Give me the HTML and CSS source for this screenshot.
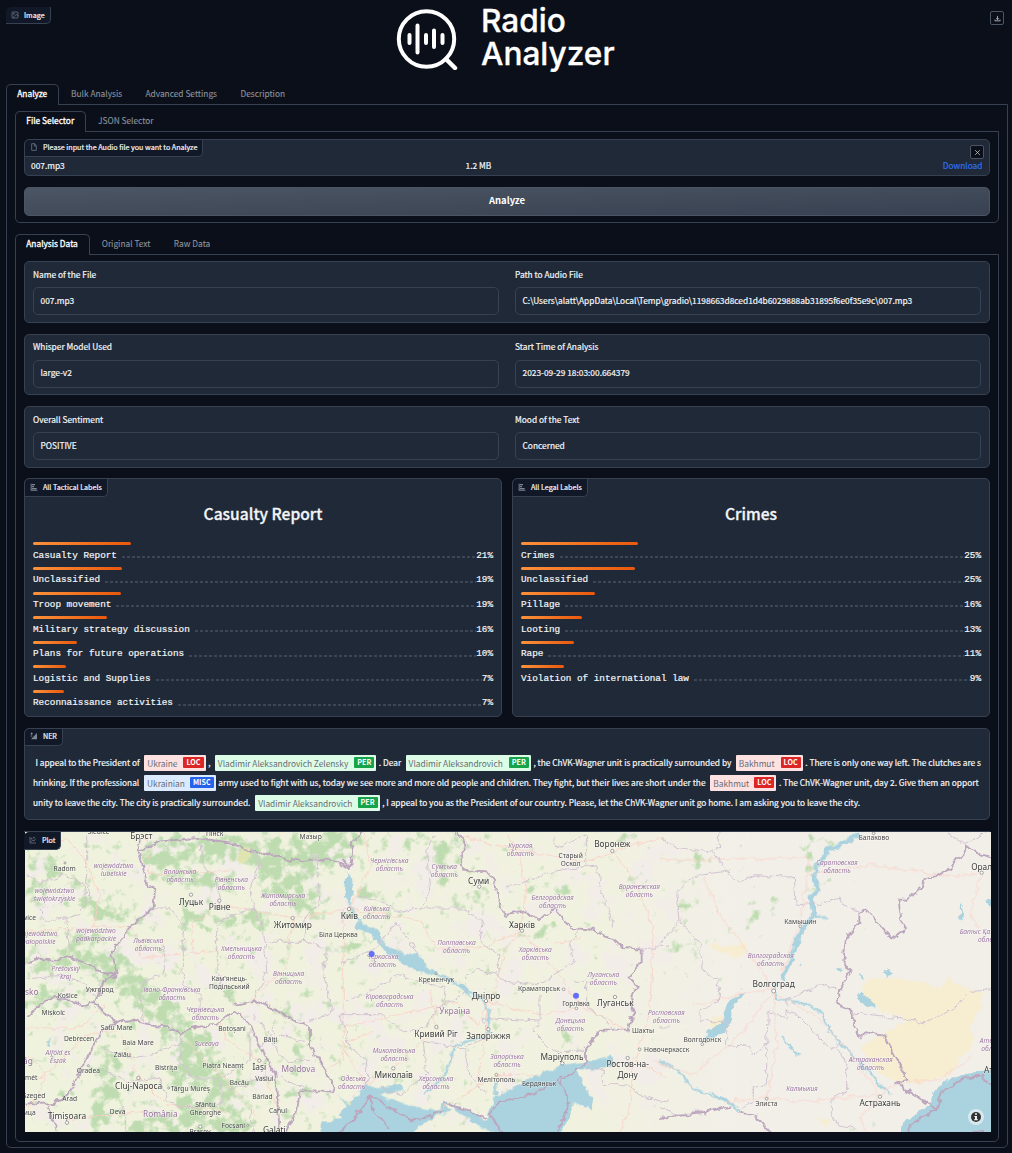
FILE: index.html
```html
<!DOCTYPE html>
<html lang="en">
<head>
<meta charset="utf-8">
<title>Radio Analyzer</title>
<link rel="stylesheet" href="styles.css">
</head>
<body>
<header class="banner">
  <div class="tag tag-image"><svg class="ico" viewBox="0 0 24 24"><rect x="3" y="3" width="18" height="18" rx="2"/><circle cx="8.5" cy="8.5" r="1.5"/><path d="M21 15l-5-5L5 21"/></svg>Image</div>
  <div class="logo">
    <svg class="logo-mark" viewBox="0 0 62 62"><circle cx="30.5" cy="31" r="27.7" stroke-width="4"/><path stroke-width="4.5" d="M50 51l9 9"/><path stroke-width="4" d="M13.500 27v8M21.500 17.500v27M30 27v8M38 22.500v16.500M46.500 27v8"/></svg>
    <div class="logo-text">Radio<br>Analyzer</div>
  </div>
  <button class="icon-btn"><svg viewBox="0 0 24 24"><path d="M12 3v13M7 11l5 5 5-5M3 16v4h18v-4"/></svg></button>
</header>

<nav class="tabs"><span class="tab on">Analyze</span><span class="tab">Bulk Analysis</span><span class="tab">Advanced Settings</span><span class="tab">Description</span></nav>
<main class="panel outer">
  <nav class="tabs inner"><span class="tab on">File Selector</span><span class="tab">JSON Selector</span></nav>
  <section class="panel selector">
    <div class="block file">
      <div class="tag"><svg class="ico" viewBox="0 0 24 24"><path d="M14 2H5v20h14V8zM13 2v7h6"/></svg>Please input the Audio file you want to Analyze</div>
      <button class="icon-btn"><svg class="cross" viewBox="0 0 24 24"><path d="M4 4l16 16M20 4L4 20"/></svg></button>
      <div class="file-row"><span>007.mp3</span><span>1.2 MB</span><a>Download</a></div>
    </div>
    <button class="primary">Analyze</button>
  </section>

  <nav class="tabs inner second"><span class="tab on">Analysis Data</span><span class="tab">Original Text</span><span class="tab">Raw Data</span></nav>
  <section class="panel results">
    <div class="block pair">
      <label>Name of the File<span class="input">007.mp3</span></label>
      <label>Path to Audio File<span class="input path">C:\Users\alatt\AppData\Local\Temp\gradio\1198663d8ced1d4b6029888ab31895f6e0f35e9c\007.mp3</span></label>
    </div>
    <div class="block pair">
      <label>Whisper Model Used<span class="input">large-v2</span></label>
      <label>Start Time of Analysis<span class="input">2023-09-29 18:03:00.664379</span></label>
    </div>
    <div class="block pair">
      <label>Overall Sentiment<span class="input">POSITIVE</span></label>
      <label>Mood of the Text<span class="input">Concerned</span></label>
    </div>
    <div class="charts">
      <div class="block chart">
        <div class="tag"><svg class="ico solid" viewBox="0 0 24 24"><path d="M2 2h3v18h17v3H2zM6 3h9v4H6zM6 9h6v4H6zM6 15h14v4H6z"/></svg>All Tactical Labels</div>
        <h2>Casualty Report</h2>
        <div class="row"><i style="width:98px"></i><p>Casualty Report<b></b><span>21%</span></p></div>
        <div class="row"><i style="width:89px"></i><p>Unclassified<b></b><span>19%</span></p></div>
        <div class="row"><i style="width:88px"></i><p>Troop movement<b></b><span>19%</span></p></div>
        <div class="row"><i style="width:74px"></i><p>Military strategy discussion<b></b><span>16%</span></p></div>
        <div class="row"><i style="width:44px"></i><p>Plans for future operations<b></b><span>10%</span></p></div>
        <div class="row"><i style="width:33px"></i><p>Logistic and Supplies<b></b><span>7%</span></p></div>
        <div class="row"><i style="width:31px"></i><p>Reconnaissance activities<b></b><span>7%</span></p></div>
      </div>
      <div class="block chart">
        <div class="tag"><svg class="ico solid" viewBox="0 0 24 24"><path d="M2 2h3v18h17v3H2zM6 3h9v4H6zM6 9h6v4H6zM6 15h14v4H6z"/></svg>All Legal Labels</div>
        <h2>Crimes</h2>
        <div class="row"><i style="width:117px"></i><p>Crimes<b></b><span>25%</span></p></div>
        <div class="row"><i style="width:114px"></i><p>Unclassified<b></b><span>25%</span></p></div>
        <div class="row"><i style="width:74px"></i><p>Pillage<b></b><span>16%</span></p></div>
        <div class="row"><i style="width:61px"></i><p>Looting<b></b><span>13%</span></p></div>
        <div class="row"><i style="width:53px"></i><p>Rape<b></b><span>11%</span></p></div>
        <div class="row"><i style="width:43px"></i><p>Violation of international law<b></b><span>9%</span></p></div>
      </div>
    </div>
    <div class="block ner">
      <div class="tag"><svg class="ico bright" viewBox="0 0 24 24"><path d="M2 5h6M5 2v6M2 12h5"/><path class="fill" d="M3 22L21 3v19z"/></svg>NER</div>
      <div class="line l1"><span class="t">I appeal to the President of</span><mark class="loc">Ukraine<em>LOC</em></mark><span class="t">,</span><mark class="per">Vladimir Aleksandrovich Zelensky<em>PER</em></mark><span class="t">. Dear</span><mark class="per">Vladimir Aleksandrovich<em>PER</em></mark><span class="t">, the ChVK-Wagner unit is practically surrounded by</span><mark class="loc">Bakhmut<em>LOC</em></mark><span class="t">. There is only one way left. The clutches are s</span></div>
      <div class="line"><span class="t">hrinking. If the professional</span><mark class="misc">Ukrainian<em>MISC</em></mark><span class="t">army used to fight with us, today we see more and more old people and children. They fight, but their lives are short under the</span><mark class="loc">Bakhmut<em>LOC</em></mark><span class="t">. The ChVK-Wagner unit, day 2. Give them an opport</span></div>
      <div class="line"><span class="t">unity to leave the city. The city is practically surrounded.</span><mark class="per">Vladimir Aleksandrovich<em>PER</em></mark><span class="t">, I appeal to you as the President of our country. Please, let the ChVK-Wagner unit go home. I am asking you to leave the city.</span></div>
    </div>
    <div class="plot">
      <div class="tag"><svg class="ico" viewBox="0 0 24 24"><path d="M3 3v18h18M7 17l4-5 4 3 5-7"/><circle cx="8" cy="8" r="1.500"/><circle cx="15" cy="5" r="1.500"/></svg>Plot</div>
      <svg class="map" viewBox="0 0 2898 900" preserveAspectRatio="none">
        <defs>
          <linearGradient id="land"><stop offset="0" stop-color="#eff2dc"/><stop offset=".6" stop-color="#f1f1e0"/><stop offset=".76" stop-color="#f2efe9"/><stop offset="1" stop-color="#f2efe9"/></linearGradient>
          <filter id="woods" filterUnits="userSpaceOnUse" x="0" y="0" width="2898" height="900" color-interpolation-filters="sRGB">
            <feGaussianBlur in="SourceGraphic" stdDeviation="16" result="s"/>
            <feTurbulence type="fractalNoise" baseFrequency=".03" numOctaves="5" seed="7" result="n"/>
            <feComposite in="s" in2="n" operator="arithmetic" k2=".34" k3=".65"/>
            <feColorMatrix values="0 0 0 0 .745  0 0 0 0 .863  0 0 0 0 .69  0 0 0 7 -3.8"/>
          </filter>
          <filter id="heath" filterUnits="userSpaceOnUse" x="0" y="0" width="2898" height="900" color-interpolation-filters="sRGB">
            <feGaussianBlur in="SourceGraphic" stdDeviation="30" result="s"/>
            <feTurbulence type="fractalNoise" baseFrequency=".012" numOctaves="4" seed="3" result="n"/>
            <feComposite in="s" in2="n" operator="arithmetic" k2=".3" k3=".65"/>
            <feColorMatrix values="0 0 0 0 .95  0 0 0 0 .93  0 0 0 0 .91  0 0 0 9 -5"/>
          </filter>
          <filter id="rough" filterUnits="userSpaceOnUse" x="0" y="0" width="2898" height="900" color-interpolation-filters="sRGB">
            <feTurbulence type="fractalNoise" baseFrequency=".04" numOctaves="3" seed="5"/>
            <feDisplacementMap in="SourceGraphic" scale="22" xChannelSelector="R" yChannelSelector="G"/>
          </filter>
        </defs>
        <rect width="2898" height="900" fill="url(#land)"/>
        <g filter="url(#heath)"><rect width="2000" height="900" opacity=".75"/></g>
        <g filter="url(#woods)" class="woods">
          <rect width="1000" height="900" opacity=".37" stroke="none"/><rect x="1000" width="500" height="900" opacity=".28" stroke="none"/><rect x="1500" width="700" height="500" opacity=".18" stroke="none"/>
          <g transform="translate(-15 -12)">
            <path stroke-width="85" d="M180 350L280 420L370 500L470 590L560 700L600 820L650 910"/>
            <path stroke-width="50" d="M20 410L150 400L260 440M20 520L120 500"/>
            <path stroke-width="80" d="M400 70L560 55L680 70M730 120L850 130L960 30M740 50L990 40M780 160L880 230"/>
            <path stroke-width="45" d="M400 130L640 170M40 90L100 130M500 270L740 280M170 190L250 250L350 270M20 210L100 150"/>
            <path stroke-width="70" d="M265 700L260 800L230 880M490 650L490 780L500 880M330 900L600 880"/>
            <path stroke-width="30" opacity=".7" d="M780 540L850 620L830 800M650 700L700 860M590 470L640 510"/>
          </g>
          <g transform="translate(945 -12)"><path stroke-width="50" opacity=".75" d="M10 30L120 30M280 60L330 150M180 30L290 30L340 120M340 20L370 60M60 200L150 240M590 320L620 300M350 240L440 200M20 360L110 350M580 180L690 170M900 140L880 180M840 40L870 20M680 620L690 670"/></g>
          <g transform="translate(1905 -12)"><path stroke-width="42" opacity=".8" d="M420 30L510 40M440 80L480 130M80 130L130 90M250 290L350 210M50 350L120 350M60 270L80 220M440 170L480 190M640 910L600 900"/></g>
        </g>
        <path fill="#dfe4b0" transform="translate(-15 -12)" d="M668 55L690 58L692 85L670 110L650 95Z"/>
        <g transform="translate(1905 -12)" fill="#f7edd0" filter="url(#rough)">
          <path d="M625 455L700 450L800 465L840 485L860 445L925 485L970 490L960 540L930 600L940 650L905 690L870 740L780 765L690 755L640 720L605 660L670 615L730 590L735 568L660 545L620 510L605 485Z"/>
          <path d="M155 570L185 560L190 600L150 615ZM150 345L215 360L250 340L262 370L220 395L205 375L155 365ZM475 870L515 880L500 905Z"/>
        </g>
        <g fill="#aad3df" filter="url(#rough)">
          <path transform="translate(-15 -12)" d="M950 798L972 820L990 830L1010 915L905 915L905 880L940 880L975 860L978 835ZM978 150L990 140L1002 200L985 220L976 190ZM78 650L95 625L85 655Z"/>
          <g transform="translate(945 -12)">
            <path d="M0 915L0 860L60 795L80 765L110 785L180 770L195 785L120 800L200 830L290 850L315 820L330 850L270 870L220 912L220 925L0 925Z"/>
            <path d="M320 825L400 850L440 880L460 810L500 790L560 755L620 730L670 710L740 700L815 683L825 710L770 725L710 725L730 770L760 810L755 845L700 820L690 860L665 912L665 925L480 925L420 895Z"/>
            <path d="M20 130L30 150L28 220L15 210ZM45 280L100 300L125 315L120 345L200 380L225 370L245 395L275 430L240 435L170 395L110 345L95 320L50 300ZM340 460L385 480L395 510L375 495Z"/>
            <path d="M462 760L472 800L465 805ZM0 870L-50 915L0 915Z"/>
          </g>
          <g transform="translate(1905 -12)">
            <path d="M255 495L225 530L210 570L195 615L150 625L135 640L145 600L185 590L195 550L210 515ZM490 60L525 55L570 45L505 70L500 80ZM150 790L190 805L240 840L200 825Z"/>
            <path d="M1020 725L940 730L860 760L820 790L800 840L730 880L720 930L1020 930ZM605 490L650 540L615 535L590 510ZM975 215L1000 210L1000 240ZM670 425L700 435L680 450ZM530 420L548 422L545 432L530 432Z"/>
          </g>
        </g>
        <g class="river" filter="url(#rough)">
          <path transform="translate(945 -12)" stroke-width="7" d="M25 190L35 260L100 320L170 380L280 435L370 475L430 520L445 550L448 620L350 650L310 750L250 800M470 760L465 800"/>
          <g transform="translate(1905 -12)">
            <path stroke-width="13" d="M600 22L510 65L470 110L462 150L480 185L450 210L465 255L430 300L408 350L385 410L365 455"/>
            <path stroke-width="6" d="M355 465L342 490L350 515L440 525L485 555L505 605L560 665L610 715L660 770L690 800M465 265L505 268M0 700L50 725L100 780L200 820L240 850M365 625L415 685M900 270L908 225M610 455L600 440M420 410L425 415"/>
          </g>
        </g>
        <g class="road" filter="url(#rough)">
          <g transform="translate(-15 -12)">
            <path d="M50 60L140 30L200 100L240 200L220 300L20 310M380 20L390 140L640 125M220 295L340 300L360 390L520 375L590 370M520 375L515 290L600 230L820 270L990 245M820 270L800 420L690 520M20 600L180 600L260 520M20 680L80 740L20 860M290 610L200 620L100 720L50 760M360 750L440 830L620 850M360 750L300 620M720 700L620 640L600 570M720 700L780 860M140 875L280 860L370 850M500 640L600 740L710 860M970 250L970 700L920 720"/>
          </g>
          <g transform="translate(945 -12)">
            <path d="M70 20L95 110L50 200L30 240M30 240L240 280L290 360L420 360L540 310M545 305L500 360L460 490L440 520M460 490L410 590L350 520L0 600M540 310L560 180L530 60L500 20M350 20L500 60L740 100L820 70M820 70L890 170L940 300L930 540L890 690M820 70L960 30M545 305L640 420L720 530L850 600M880 690L870 840L840 912M880 690L980 750M440 520L600 560L700 540M440 550L440 620L410 750M160 720L290 600L270 480M160 720L80 770L0 640M640 350L720 330M300 850L460 740L600 740M20 640L100 610"/>
          </g>
          <g transform="translate(1905 -12)">
            <path d="M0 95L450 90M130 150L180 260L340 480M340 480L100 530M450 90L430 230L420 290L360 440M450 140L640 110L860 145L965 135M340 490L240 620L100 740L-20 700M340 490L350 650L320 810M200 820L320 810L440 820L660 800M350 500L460 560L560 660L660 800M660 800L700 770L850 750L940 680M965 135L930 250L960 310M660 800L600 870L620 915"/>
          </g>
        </g>
        <g class="border" filter="url(#rough)">
          <g transform="translate(-15 -12)">
            <path class="b2" d="M20 402L60 392L100 398L140 385L200 405L250 435L290 440M290 440L275 370L330 300L400 240L405 185L385 170L355 70L360 30M360 70L420 40L530 30L640 45L690 70L730 75L830 100L880 95L940 95L990 125M290 440L250 460L225 525L290 585L330 575L390 590L450 595L485 620L510 600L590 590L640 550L680 575L720 660L765 730L780 912M640 530L720 520L790 560L870 600L870 650L935 760L945 795L900 790L840 790L830 850L800 912M225 525L185 535L150 515L110 510L70 520L20 570M290 585L245 610L200 690L180 730L145 800L100 825L20 830M85 835L110 912"/>
            <path d="M20 140L60 165L130 140L190 170L200 210L180 260L140 265L80 280L50 240M140 265L150 380M200 20L200 170L210 220M540 50L550 110L590 150L600 230M390 240L450 240L490 290M690 60L720 100L690 190L700 240L590 280L590 370L600 480L640 520M490 290L490 470L540 500L540 570M430 350L430 440L370 460L360 510L370 580M700 240L730 300L740 430L700 520M890 80L900 230L860 260L850 340L740 340M850 340L920 360L910 440L940 550L870 580M480 620L480 700L520 750L600 750L690 700L690 600M250 660L330 690L400 680L480 640M240 720L320 760L420 750L440 820L500 840L610 820L600 760M620 790L690 760L760 740M700 560L750 620L720 660M760 570L760 650L800 700L870 700M780 620L850 640M780 750L850 780M310 830L320 912M690 840L700 912M20 450L120 440L180 460L230 510"/>
          </g>
          <g transform="translate(945 -12)">
            <path class="b2" d="M70 12L40 40L30 120L0 95M350 12L380 50L360 90L370 125L440 130L465 160L480 240L500 260L560 250L590 275L650 245L690 300L760 305L830 340L850 360L905 365L905 400L865 450L890 470L870 530L885 550L865 605L780 605L735 660L735 710L660 760L690 825L650 912M660 750L580 800L480 820L450 860L485 912M310 825L380 845L440 870M90 800L95 840L150 900M310 850L215 880L90 800M0 912L60 850L90 800"/>
            <path d="M280 20L260 70L270 200L240 240L170 250L150 230L50 200M170 280L110 360L0 410M170 280L230 370L225 395M240 240L360 240L430 280L420 340L480 380L470 440L500 460L600 470L700 400L690 350L720 300M470 440L420 425L380 440L370 500L290 540L260 600L180 610L130 560L0 560M180 440L110 480L20 520M180 440L240 460L320 480L310 540M430 570L460 570L600 580L600 500M430 570L440 630L370 660L250 640L260 740L180 800L120 780M370 660L390 740L440 800M600 580L580 610L640 670L730 670M500 180L590 150L640 130L770 110L780 170L820 300M640 20L650 60L740 20L740 110M700 460L740 460L740 530L820 600M960 600L990 600M0 560L30 660L80 700L80 770M900 365L990 350M735 710L790 730L790 770L860 770L900 800L960 820L990 820"/>
          </g>
          <g transform="translate(1905 -12)">
            <path class="b2" d="M1000 90L950 75L915 55L910 75L870 120L830 145L790 150L785 180L740 215L715 215L725 280L738 300L695 332L665 300L620 242L598 255L598 285L558 330L550 400L570 430L522 525L578 550L580 600L600 625L610 612L670 620L745 752L710 765L830 845L845 790L915 750L970 740L980 770L1000 772M830 845L750 890L745 915M990 912L940 912M240 850L290 865L330 912M0 870L130 855L210 835"/>
            <path d="M0 30L40 55L140 75L175 60L180 12M160 70L195 130L235 165L290 140L400 150L405 225L480 230L540 210L560 240L598 250M195 130L100 145L50 195L60 280L0 350M60 280L120 350L130 430L175 460L175 520L120 550L120 580L200 580L200 650L270 655L280 685L320 650L325 550L380 570L385 515L480 470L530 480M380 550L410 560L450 600L510 665L550 645M530 660L560 710L560 790L520 810L510 850L530 890L590 900M320 650L320 770L280 775L280 820L240 850M580 555L730 570L790 585L870 550L935 490L1000 485M860 15L915 50L1000 0M0 835L40 860L130 850"/>
          </g>
        </g>
        <g class="dots">
          <g transform="translate(-15 -12)"><circle cx="513" cy="200" r="5"/><circle cx="598" cy="218" r="5"/><circle cx="818" cy="270" r="5"/><circle cx="355" cy="750" r="5"/><circle cx="718" cy="698" r="5"/><circle cx="141" cy="884" r="5"/><circle cx="541" cy="896" r="5"/><circle cx="135" cy="105" r="3"/><circle cx="205" cy="713" r="3"/><circle cx="446" cy="780" r="3"/><circle cx="683" cy="892" r="3"/></g>
          <g transform="translate(945 -12)"><circle cx="27" cy="243" r="5"/><circle cx="418" cy="176" r="5"/><circle cx="546" cy="308" r="5"/><circle cx="817" cy="69" r="5"/><circle cx="438" cy="519" r="5"/><circle cx="445" cy="604" r="5"/><circle cx="289" cy="597" r="5"/><circle cx="160" cy="721" r="5"/><circle cx="667" cy="706" r="5"/><circle cx="825" cy="507" r="5"/><circle cx="863" cy="690" r="5"/><circle cx="671" cy="484" r="4"/><circle cx="899" cy="664" r="4"/><circle cx="709" cy="541" r="4"/><circle cx="288" cy="437" r="3"/><circle cx="469" cy="740" r="4"/></g>
          <g transform="translate(1905 -12)"><circle cx="341" cy="489" r="6"/><circle cx="660" cy="806" r="5"/><circle cx="965" cy="134" r="5"/><circle cx="320" cy="812" r="4"/><circle cx="421" cy="295" r="4"/><circle cx="641" cy="16" r="4"/><circle cx="127" cy="649" r="4"/></g>
        </g>
        <g class="region">
          <g transform="translate(-15 -12)">
            <text x="281" y="121">województwo<tspan x="281" dy="24">lubelskie</tspan></text>
            <text x="103" y="195">województwo<tspan x="103" dy="24">świętokrzyskie</tspan></text>
            <text x="228" y="316">województwo<tspan x="228" dy="24">podkarpackie</tspan></text>
            <text x="53" y="325">województwo<tspan x="53" dy="24">małopolskie</tspan></text>
            <text x="480" y="139">Волинська<tspan x="480" dy="24">область</tspan></text>
            <text x="634" y="161">Рівненська<tspan x="634" dy="24">область</tspan></text>
            <text x="789" y="211">Житомирська<tspan x="789" dy="24">область</tspan></text>
            <text x="385" y="346">Львівська<tspan x="385" dy="24">область</tspan></text>
            <text x="664" y="368">Хмельницька<tspan x="664" dy="24">область</tspan></text>
            <text x="806" y="445">Вінницька<tspan x="806" dy="24">область</tspan></text>
            <text x="456" y="492">Івано-Франківська<tspan x="456" dy="24">область</tspan></text>
            <text x="556" y="553">Чернівецька<tspan x="556" dy="24">область</tspan></text>
            <text x="137" y="429">Prešovský<tspan x="137" dy="24">kraj</tspan></text>
            <text x="114" y="682">Alföld és<tspan x="114" dy="24">Észak</tspan></text>
            <text x="560" y="655">Suceava</text>
            <text x="1000" y="760">Одеська<tspan x="995" dy="24">область</tspan></text>
          </g>
          <g transform="translate(945 -12)">
            <text x="148" y="105">Чернігівська<tspan x="148" dy="24">область</tspan></text>
            <text x="313" y="123">Сумська<tspan x="313" dy="24">область</tspan></text>
            <text x="541" y="60">Курская<tspan x="541" dy="24">область</tspan></text>
            <text x="638" y="215">Белгородская<tspan x="638" dy="24">область</tspan></text>
            <text x="898" y="182">Воронежская<tspan x="898" dy="24">область</tspan></text>
            <text x="110" y="249">Київська<tspan x="110" dy="24">область</tspan></text>
            <text x="350" y="352">Полтавська<tspan x="350" dy="24">область</tspan></text>
            <text x="586" y="373">Харківська<tspan x="586" dy="24">область</tspan></text>
            <text x="128" y="394">Черкаська<tspan x="128" dy="24">область</tspan></text>
            <text x="790" y="447">Луганська<tspan x="790" dy="24">область</tspan></text>
            <text x="149" y="513">Кіровоградська<tspan x="149" dy="24">область</tspan></text>
            <text x="691" y="585">Донецька<tspan x="691" dy="24">область</tspan></text>
            <text x="162" y="674">Миколаївська<tspan x="162" dy="24">область</tspan></text>
            <text x="501" y="694">Запорізька<tspan x="501" dy="24">область</tspan></text>
            <text x="288" y="758">Херсонська<tspan x="288" dy="24">область</tspan></text>
            <text x="979" y="562">Ростовская<tspan x="979" dy="24">область</tspan></text>
          </g>
          <g transform="translate(1905 -12)">
            <text x="531" y="111">Саратовская<tspan x="531" dy="24">область</tspan></text>
            <text x="332" y="390">Волгоградская<tspan x="332" dy="24">область</tspan></text>
            <text x="632" y="702">Астраханская<tspan x="632" dy="24">область</tspan></text>
            <text x="426" y="789">Калмыкия</text>
            <text x="985" y="318">Батыс Қазақстан<tspan x="990" dy="24">облысы</tspan></text>
            <text x="997" y="646">Атырау<tspan x="1000" dy="24">облысы</tspan></text>
          </g>
        </g>
        <g class="country">
          <text x="820" y="720">Moldova</text><text x="406" y="856">România</text><text x="1289" y="545">Україна</text><text x="-18" y="489">Slovensko</text><text x="-60" y="696">Magyarország</text>
        </g>
        <g class="city">
          <g transform="translate(-15 -12)">
            <text x="364" y="33">Брэст</text><text x="513" y="230">Луцьк</text><text x="599" y="246">Рівне</text><text x="818" y="300">Житомир</text><text x="356" y="783">Cluj-Napoca</text><text x="718" y="726">Iași</text><text x="141" y="874">Timișoara</text><text x="763" y="914">Galați</text>
          </g>
          <g transform="translate(945 -12)">
            <text x="416" y="168">Суми</text><text x="817" y="58">Воронеж</text><text x="546" y="299">Харків</text><text x="28" y="273">Київ</text><text x="438" y="512">Дніпро</text><text x="445" y="634">Запоріжжя</text><text x="288" y="626">Кривий Ріг</text><text x="161" y="750">Миколаїв</text><text x="666" y="697">Маріуполь</text><text x="826" y="535">Луганськ</text><text x="863" y="718">Ростов-на-<tspan x="863" dy="31">Дону</tspan></text>
          </g>
          <g transform="translate(1905 -12)"><text x="341" y="478">Волгоград</text><text x="660" y="835">Астрахань</text><text x="965" y="126">Орал</text><text x="1016" y="735">Атырау</text></g>
        </g>
        <g class="town">
          <g transform="translate(-15 -12)">
            <text x="236" y="17">Siedlce</text><text x="584" y="23">Пінск</text><text x="872" y="34">Мазыр</text><text x="134" y="129">Radom</text><text x="6" y="277">Katowice</text><text x="239" y="492">Ужгород</text><text x="143" y="509">Košice</text><text x="100" y="562">Miskolc</text><text x="628" y="460">Кам'янець-<tspan x="628" dy="24">Подільський</tspan></text><text x="290" y="605">Satu Mare</text><text x="177" y="640">Debrecen</text><text x="354" y="652">Baia Mare</text><text x="307" y="687">Zalău</text><text x="205" y="735">Oradea</text><text x="438" y="727">Bistrița</text><text x="636" y="610">Botoșani</text><text x="751" y="641">Bălți</text><text x="609" y="720">Piatra Neamț</text><text x="733" y="759">Vaslui</text><text x="658" y="770">Bacău</text><text x="511" y="788">Târgu Mureș</text><text x="727" y="812">Bârlad</text><text x="774" y="856">Cahul</text><text x="556" y="836">Sfântu<tspan x="556" dy="24">Gheorghe</tspan></text><text x="149" y="820">Arad</text><text x="42" y="809">Szeged</text><text x="293" y="858">Deva</text><text x="640" y="899">Focșani</text><text x="1" y="755">Kecskemét</text><text x="1" y="862">Суботица</text><text x="955" y="327">Біла Церква</text><text x="540" y="918">Brașov</text>
          </g>
          <g transform="translate(945 -12)">
            <text x="692" y="89">Старый<tspan x="692" dy="24">Оскол</tspan></text><text x="289" y="462">Кременчук</text><text x="597" y="490">Краматорськ</text><text x="708" y="534">Горлівка</text><text x="909" y="616">Шахты</text><text x="980" y="671">Новочеркасск</text><text x="469" y="761">Мелітополь</text><text x="597" y="775">Бердянськ</text>
          </g>
          <g transform="translate(1905 -12)"><text x="642" y="37">Балаково</text><text x="421" y="287">Камышин</text><text x="127" y="642">Волгодонск</text><text x="319" y="834">Элиста</text></g>
        </g>
        <g fill="#636efa"><circle cx="1040" cy="366" r="9"/><circle cx="1653" cy="491" r="9"/></g>
        <circle cx="2853" cy="855" r="24" fill="#d5e9ef"/><circle cx="2853" cy="855" r="15" fill="#333"/>
        <path d="M2848 852h8v10h3v3h-12v-3h3v-7h-2z" fill="#e8f2f5"/><circle cx="2853" cy="846" r="3" fill="#e8f2f5"/>
      </svg>
    </div>
  </section>
</main>
</body>
</html>
```
FILE: styles.css
```css
* { box-sizing: border-box; }
body {
  margin: 0;
  padding: 7px 4px 0 6px;
  height: 1153px;
  overflow: hidden;
  background: #0b0f19;
  color: #f3f4f6;
  font: 8.36px/12px "Noto Sans CJK SC", "Open Sans", sans-serif;
  -webkit-text-stroke: .2px currentColor;
}
button { font-family: inherit; }
.banner { position: relative; display: flex; justify-content: center; height: 77px; }
.tag {
  position: absolute;
  left: 0;
  top: 0;
  display: flex;
  align-items: center;
  gap: 4px;
  height: 18px;
  padding: 0 5px 1px;
  background: #111827;
  border: 1px solid #374151;
  border-width: 0 1px 1px 0;
  border-radius: 5px 0 5px 0;
  font-size: 7.15px;
  white-space: nowrap;
}
.tag-image { height: 17px; }
.file .tag { height: 17px; padding-bottom: 2px; }
.ico { width: 8px; height: 8px; margin-right: 1px; fill: none; stroke: #9ca3af; stroke-width: 2; opacity: .8; }
.ico.solid { fill: #9ca3af; stroke: none; }
.ico.bright { stroke: #e5e7eb; }
.ico .fill { fill: #9ca3af; stroke: none; }
.logo { display: flex; margin: 1px 2px 0 0; width: 220px; }
.logo-mark { width: 62px; height: 62px; fill: none; stroke: #fff; stroke-linecap: round; }
.logo-text { margin: -4px 0 0 23px; font: 500 31.6px/33px Inter, sans-serif; color: #fff; -webkit-text-stroke: .3px #fff; }
.icon-btn {
  position: absolute;
  right: 4px;
  top: 4px;
  display: grid;
  place-items: center;
  width: 14px;
  height: 14px;
  padding: 0;
  background: #0b0f19;
  border: 1px solid #4b5563;
  border-radius: 2px;
}
.icon-btn svg { width: 7px; height: 7px; fill: none; stroke: #d1d5db; stroke-width: 2.500; }
.tabs { display: flex; height: 21px; margin-bottom: -1px; position: relative; }
.tab { padding: 2px 10.700px 0; color: #8b939f; border: 1px solid transparent; white-space: nowrap; -webkit-text-stroke: .1px currentColor; }
.tab.on { padding: 2px 11.200px 0 10.300px; color: #fff; border-color: #374151; border-bottom: 0; border-radius: 5px 5px 0 0; background: #0b0f19; -webkit-text-stroke: .3px #fff; }
.panel { border: 1px solid #374151; border-radius: 0 0 5px 5px; }
.outer { height: 1044px; padding: 6px 8px 0; }
.selector { height: 92px; padding: 7px 8px 0; }
.second { margin-top: 11px; }
.results { display: flex; flex-direction: column; height: 888px; padding: 6.400px 8px 0; }
.block { position: relative; background: #1f2937; border: 1px solid #374151; border-radius: 5px; }
.file { height: 37px; padding: 19px 6.500px 0 6px; }
.file .icon-btn { right: 5px; top: 5px; }
.file-row { display: grid; grid-template-columns: 434.500px 1fr auto; }
.file-row a { color: #2f6fee; text-align: right; }
.primary {
  display: block;
  width: 100%;
  height: 29px;
  margin-top: 11px;
  color: #fff;
  font-size: 9.5px;
  font-weight: 700;
  line-height: 12px;
  padding: 0 0 3px;
  -webkit-text-stroke: 0;
  background: linear-gradient(to bottom right, #4b5563, #374151);
  border: 1px solid #4b5563;
  border-radius: 5px;
}
.pair { display: grid; grid-template-columns: 1fr 1fr; gap: 16px; height: 61.600px; margin-bottom: 10.900px; padding: 5.500px 8px; flex: none; }
.input { display: block; height: 28px; margin-top: 7.500px; padding: 5.500px 6.500px; border: 1px solid #374151; border-radius: 5px; white-space: nowrap; }
.charts { display: grid; grid-template-columns: 1fr 1fr; gap: 10px; height: 239px; margin-top: -.400px; flex: none; }
.chart { padding: 22px 8px 0; }
h2 { margin: 0 0 16px; text-align: center; font-size: 15.6px; line-height: 25px; font-weight: 500; -webkit-text-stroke: .3px currentColor; }
.row { height: 24.600px; font: 9.330px/12px "Liberation Mono", monospace; -webkit-text-stroke: .2px currentColor; }
.row i { display: block; height: 3px; border-radius: 2px; background: linear-gradient(to right, #fb923c, #ea580c); }
.row p { display: flex; margin: 4.300px 0 0; }
.row b { flex: 1; height: 2px; margin: 6.500px 0 0 5px; opacity: .85; background: repeating-linear-gradient(90deg, #414b59 0 3px, transparent 3px 5px); }
.ner { height: 92px; margin-top: 11px; padding: 24px 8px 0; flex: none; }
.ner .tag { padding-bottom: 2px; height: 17px; }
.line { display: flex; align-items: center; height: 20px; white-space: nowrap; }
.t { margin-top: -2px; }
.l1 { padding-left: 2.400px; }
mark { display: flex; align-items: center; height: 16px; margin: 0 2.600px 0 4.800px; padding: 0 2px 1px 3px; gap: 5.200px; border-radius: 1px; color: #666b72; -webkit-text-stroke: 0; }
.l1 mark { margin: 0 2.600px 0 4.400px; gap: 6px; }
em { padding: 0 3px; height: 11px; border-radius: 1px; color: #fff; font: 700 7.150px/10px "Noto Sans CJK SC", sans-serif; }
.loc { background: #fee2e2; } .loc em { background: #dc2626; }
.per { background: #dcfce7; } .per em { background: #16a34a; }
.misc { background: #dbeafe; } .misc em { background: #2563eb; }
.plot { position: relative; height: 301px; margin-top: 11px; padding-left: 1px; border-top: 1px solid #374151; flex: none; }
.plot .tag { z-index: 1; }
.map { display: block; width: 966px; height: 300px; -webkit-text-stroke: 0; font-family: "Noto Sans", sans-serif; }
.woods { fill: #000; stroke: #000; stroke-linecap: round; stroke-linejoin: round; }
.woods path { fill: none; }
.river { fill: none; stroke: #aad3df; }
.road { fill: none; stroke: #fbd0c5; stroke-width: 2.500; }
.border { fill: none; stroke: #d2c3d1; stroke-width: 3; }
.border .b2 { stroke: #bba6bd; stroke-width: 5.500; }
.dots { fill: #fff; stroke: #777; stroke-width: 2; }
.map text { text-anchor: middle; paint-order: stroke; stroke: rgba(255, 255, 255, .5); stroke-width: 3px; }
.region { font-size: 20px; font-style: italic; fill: #9a75a0; }
.country { font-size: 25px; fill: #96709b; }
.city { font-size: 25px; fill: #3c3c3c; }
.town { font-size: 20px; fill: #484848; }
```
